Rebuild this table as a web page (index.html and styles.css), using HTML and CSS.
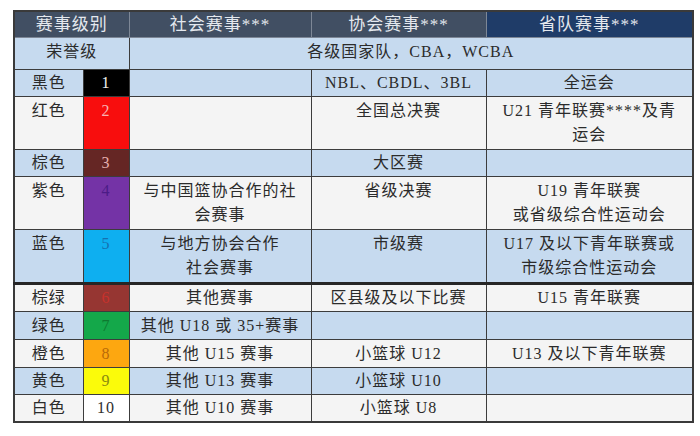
FILE: index.html
```html
<!DOCTYPE html>
<html lang="zh">
<head>
<meta charset="utf-8">
<link rel="stylesheet" href="styles.css">
</head>
<body>
<table class="grid">
  <colgroup>
    <col class="c-name"><col class="c-num"><col class="c-soc"><col class="c-assoc"><col class="c-prov">
  </colgroup>
  <tr class="head">
    <th colspan="2">赛事级别</th>
    <th>社会赛事***</th>
    <th>协会赛事***</th>
    <th class="prov">省队赛事***</th>
  </tr>
  <tr class="blue honor">
    <td colspan="2">荣誉级</td>
    <td colspan="3">各级国家队，CBA，WCBA</td>
  </tr>
  <tr class="blue one">
    <td>黑色</td><td class="n n1">1</td><td></td><td>NBL、CBDL、3BL</td><td>全运会</td>
  </tr>
  <tr class="white two top">
    <td>红色</td><td class="n n2">2</td><td></td><td>全国总决赛</td><td>U21 青年联赛****及青<br>运会</td>
  </tr>
  <tr class="blue one">
    <td>棕色</td><td class="n n3">3</td><td></td><td>大区赛</td><td></td>
  </tr>
  <tr class="white two top">
    <td>紫色</td><td class="n n4">4</td><td>与中国篮协合作的社<br>会赛事</td><td>省级决赛</td><td>U19 青年联赛<br>或省级综合性运动会</td>
  </tr>
  <tr class="blue two top">
    <td>蓝色</td><td class="n n5">5</td><td>与地方协会合作<br>社会赛事</td><td>市级赛</td><td>U17 及以下青年联赛或<br>市级综合性运动会</td>
  </tr>
  <tr class="white one split">
    <td>棕绿</td><td class="n n6">6</td><td>其他赛事</td><td>区县级及以下比赛</td><td>U15 青年联赛</td>
  </tr>
  <tr class="blue one tall">
    <td>绿色</td><td class="n n7">7</td><td>其他 U18 或 35+赛事</td><td></td><td></td>
  </tr>
  <tr class="white one tall">
    <td>橙色</td><td class="n n8">8</td><td>其他 U15 赛事</td><td>小篮球 U12</td><td>U13 及以下青年联赛</td>
  </tr>
  <tr class="blue one">
    <td>黄色</td><td class="n n9">9</td><td>其他 U13 赛事</td><td>小篮球 U10</td><td></td>
  </tr>
  <tr class="white one">
    <td>白色</td><td class="n n10">10</td><td>其他 U10 赛事</td><td>小篮球 U8</td><td></td>
  </tr>
</table>
</body>
</html>
```

FILE: styles.css
```css
html, body {
  margin: 0;
  padding: 0;
  background: #ffffff;
}
body {
  padding: 10px 0 0 13px;
  font-family: "Liberation Serif", "Noto Sans CJK SC", serif;
  font-size: 16px;
  color: #2b2b2b;
}
.grid {
  border-collapse: collapse;
  table-layout: fixed;
  width: 679px;
  border: 2px solid #3a3a3a;
}
.c-name { width: 69px; }
.c-num { width: 46px; }
.c-soc { width: 182px; }
.c-assoc { width: 175px; }
.c-prov { width: 207px; }

.grid th, .grid td {
  border: 1px solid #3c3c3c;
  text-align: center;
  padding: 0 1px;
  line-height: 24px;
  letter-spacing: 1px;
  overflow: hidden;
  white-space: nowrap;
}
.head th {
  height: 25px;
  background: #414f63;
  color: #e4e8ee;
  font-weight: normal;
  font-size: 17px;
  border-color: #7d8796;
  border-top-color: #3a3a3a;
}
.head th.prov {
  background: #1f3c68;
}
.honor td {
  height: 27px;
  padding-bottom: 4px;
}
.blue td { background: #c6daef; }
.white td { background: #f4f4f4; }
.one td { height: 26px; }
.tall td { height: 27px; }
.two td { height: 50px; }
.top td { vertical-align: top; padding-top: 2px; }
.split td { border-top: 3px solid #262626; height: 26px; }

.n { letter-spacing: 0; }
.grid td.n1 { background: #000000; color: #f0f0f0; }
.grid td.n2 { background: #f80d0d; color: #f7b3b3; }
.grid td.n3 { background: #652624; color: #e6b0ae; }
.grid td.n4 { background: #7433a6; color: #4b1c86; }
.grid td.n5 { background: #0eaff0; color: #1571b0; }
.grid td.n6 { background: #963632; color: #c8322c; }
.grid td.n7 { background: #14a84a; color: #0e7a30; }
.grid td.n8 { background: #fda710; color: #b86a08; }
.grid td.n9 { background: #fbfb0a; color: #8a8a10; }
.grid td.n10 { background: #ffffff; color: #2e2e2e; }
```
